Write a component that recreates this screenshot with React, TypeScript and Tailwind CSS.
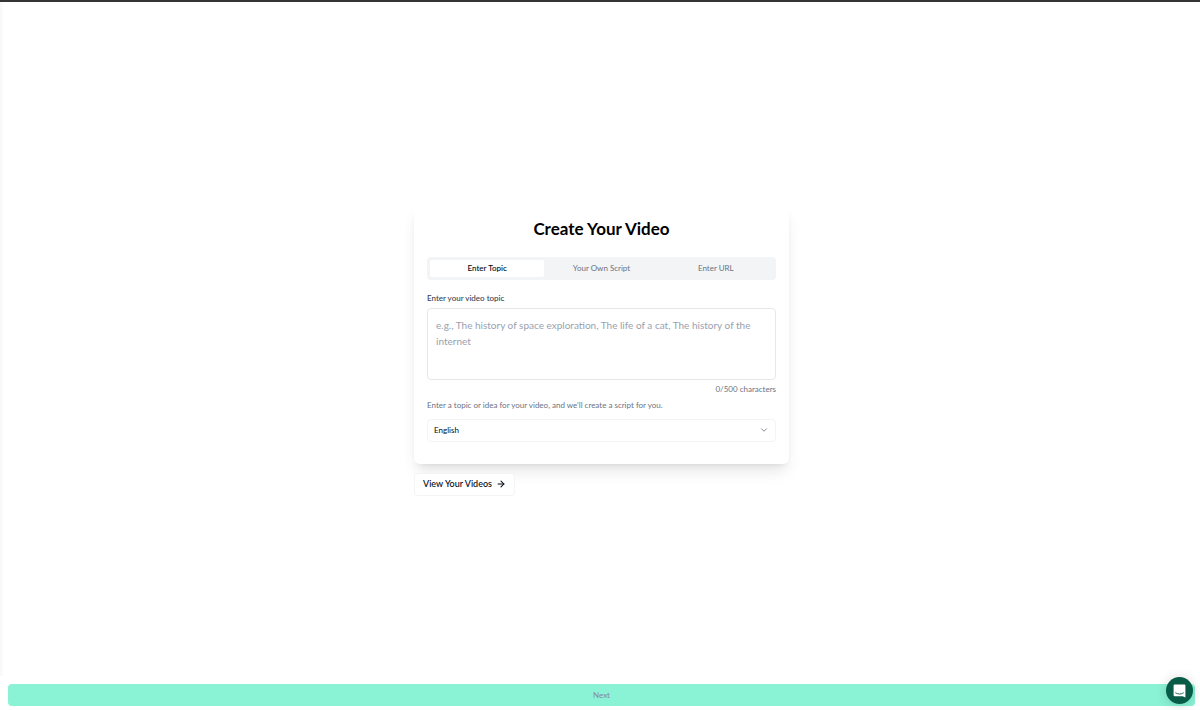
"use client";

import React, { useState } from "react";
import { ArrowRight, ChevronDown } from "lucide-react";
import clsx from "clsx";

const MAX_CHARACTERS = 500;

const tabs = ["Enter Topic", "Your Own Script", "Enter URL"];

const Tabs = ({
  active,
  onChange,
}: {
  active: string;
  onChange: (tab: string) => void;
}) => {
  return (
    <div
      role="tablist"
      className="grid grid-cols-3 w-full h-[23px] p-[3px] rounded bg-gray-100"
    >
      {tabs.map((tab) => (
        <button
          key={tab}
          type="button"
          role="tab"
          aria-selected={active === tab}
          onClick={() => onChange(tab)}
          className={clsx(
            "rounded-xs text-[8px] leading-3",
            active === tab
              ? "bg-white font-medium text-gray-950"
              : "text-gray-500"
          )}
        >
          {tab}
        </button>
      ))}
    </div>
  );
};

const ChatLauncher = () => {
  return (
    <button
      type="button"
      aria-label="Open chat"
      className="
        fixed bottom-1.5 right-[7px] flex h-[27px] w-[27px] items-center justify-center
        rounded-full bg-[#085c47] shadow-[0_1px_12px_rgba(0,0,0,0.16)]"
    >
      <svg width="13" height="14" viewBox="0 0 13 14" fill="none">
        <path
          d="M1.6 0.5h9.8a1 1 0 0 1 1 1v12L9.6 12.2h-8a1 1 0 0 1-1-1V1.5a1 1 0 0 1 1-1Z"
          fill="white"
        />
        <path
          d="M2.6 8.9c2.2 1.6 5.6 1.6 7.8 0"
          stroke="#085c47"
          strokeWidth="0.9"
          strokeLinecap="round"
        />
      </svg>
    </button>
  );
};

const App = () => {
  const [tab, setTab] = useState(tabs[0]);
  const [topic, setTopic] = useState("");

  return (
    <div className="flex min-h-screen flex-col border-t-2 border-[#353334] bg-white font-['Lato',sans-serif] text-gray-950">
      <main className="flex flex-1 flex-col items-center justify-center pt-[22px] pl-[3px] shadow-[inset_4px_0_4px_-3px_rgba(0,0,0,0.05)]">
        <div className="w-full max-w-[375px]">
          <section className="rounded-md bg-white px-[13px] pt-3 pb-[22px] shadow-lg">
            <h1 className="text-center text-[17px] leading-6 font-bold text-black">
              Create Your Video
            </h1>

            <div className="mt-4">
              <Tabs active={tab} onChange={setTab} />
            </div>

            <label
              htmlFor="topic"
              className="mt-3 block text-[8px] leading-3 font-medium text-gray-700"
            >
              Enter your video topic
            </label>
            <textarea
              id="topic"
              value={topic}
              maxLength={MAX_CHARACTERS}
              onChange={(e) => setTopic(e.target.value)}
              placeholder="e.g., The history of space exploration, The life of a cat, The history of the internet"
              className="
                mt-1 block h-[72px] w-full resize-none rounded-sm border border-gray-200
                p-2 text-[10px] leading-4 placeholder:text-gray-400"
            />
            <p className="mt-[3px] text-right text-[8px] leading-3 text-gray-500">
              {topic.length}/{MAX_CHARACTERS} characters
            </p>
            <p className="mt-1 text-[8px] leading-3 text-gray-500">
              Enter a topic or idea for your video, and we'll create a script
              for you.
            </p>

            <div className="relative mt-2">
              <select
                aria-label="Language"
                className="
                  block h-[23px] w-full appearance-none rounded-sm border border-gray-100
                  bg-white px-1.5 text-[8px] leading-3 text-gray-950"
              >
                <option>English</option>
                <option>Spanish</option>
                <option>French</option>
              </select>
              <ChevronDown className="pointer-events-none absolute top-1.5 right-[7px] h-2.5 w-2.5 text-gray-500" />
            </div>
          </section>

          <a
            href="#videos"
            className="
              mt-[9px] flex h-[23px] w-fit items-center gap-1 rounded-sm border border-gray-100
              bg-white px-2 text-[9px] leading-3 font-medium text-gray-950"
          >
            View Your Videos
            <ArrowRight className="h-2.5 w-2.5" strokeWidth={2.5} />
          </a>
        </div>
      </main>

      <footer className="pt-2 pr-[5px] pb-1 pl-2">
        <button
          type="button"
          className="block h-[22px] w-full rounded bg-[#8af2d5] text-[8px] leading-3 text-[#83899a]"
        >
          Next
        </button>
      </footer>

      <ChatLauncher />
    </div>
  );
};

export default App;
